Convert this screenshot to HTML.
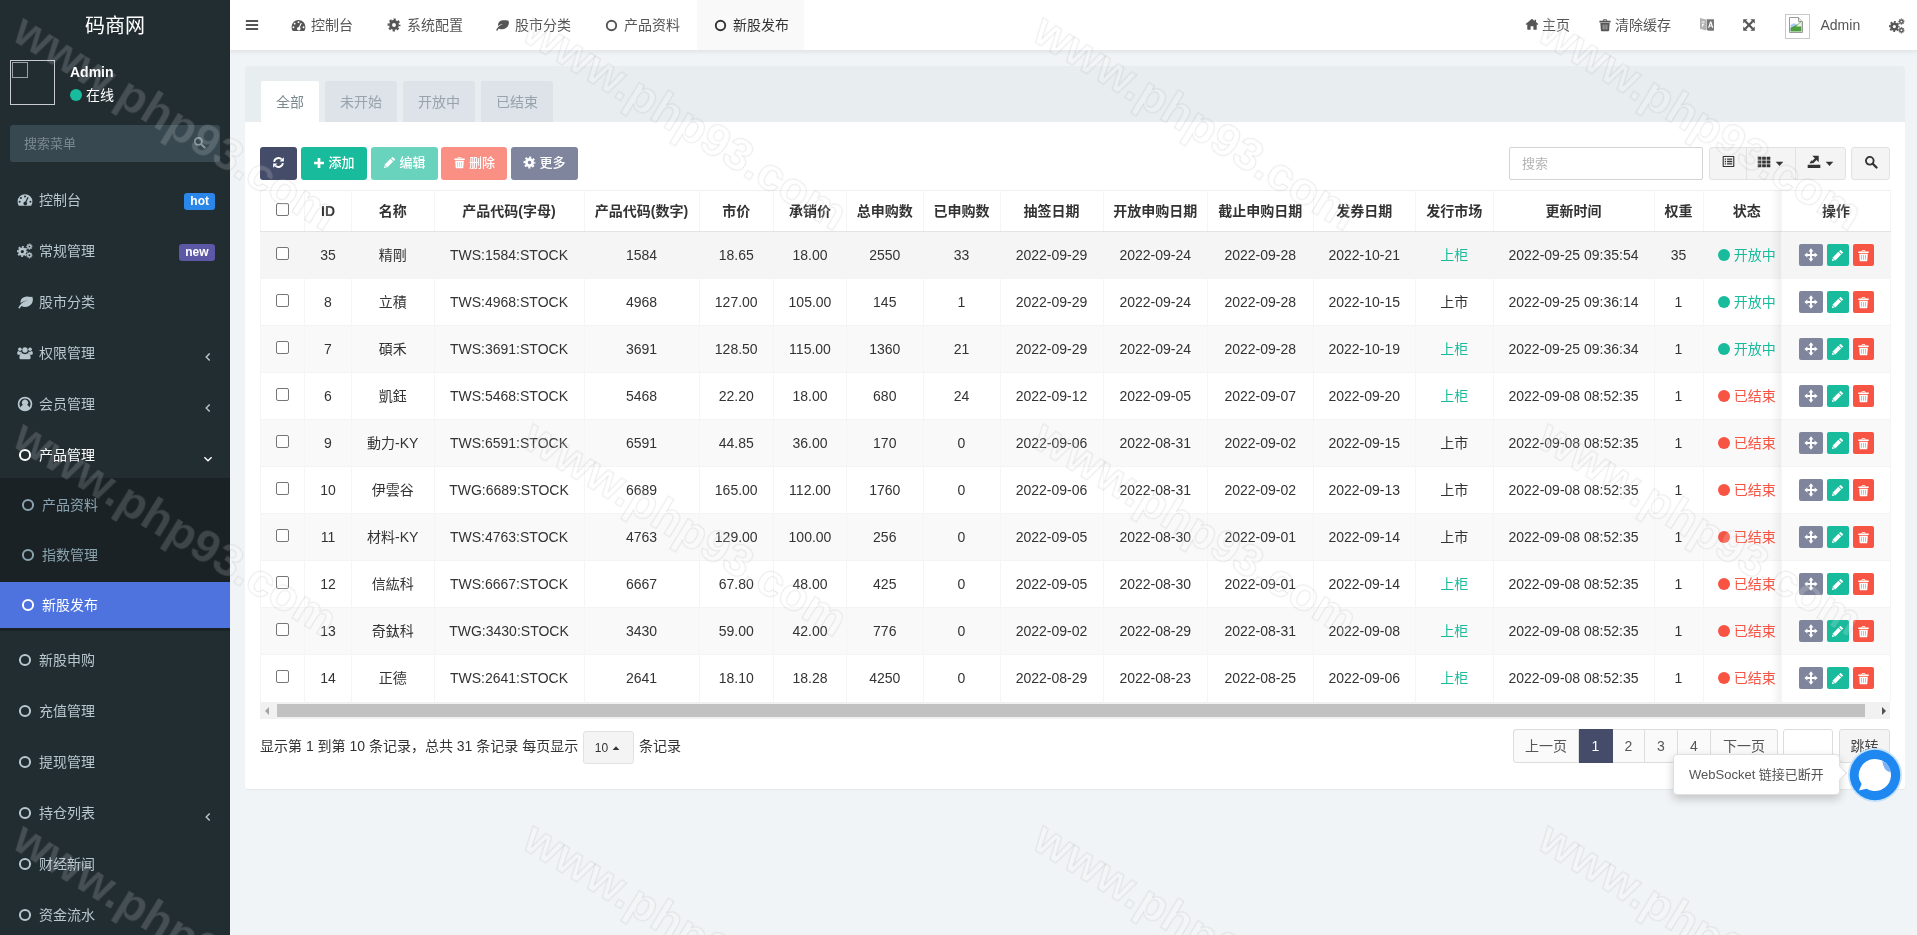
<!DOCTYPE html>
<html lang="zh-CN">
<head>
<meta charset="utf-8">
<title>码商网</title>
<style>
*{box-sizing:border-box;}
html,body{margin:0;padding:0;}
body{width:1917px;height:935px;overflow:hidden;will-change:transform;background:#f1f4f6;font-family:"Liberation Sans","Noto Sans CJK SC",sans-serif;font-size:14px;color:#333;position:relative;line-height:1.42857;}
svg{display:block;}
i,em,b,u{font-style:normal;text-decoration:none;}
.abs{position:absolute;}
/* ---------- sidebar ---------- */
#sidebar{position:absolute;left:0;top:0;width:230px;height:935px;background:#222d32;color:#b8c7ce;overflow:hidden;}
#logo{position:absolute;left:0;top:0;width:230px;height:50px;line-height:52px;text-align:center;color:#fff;font-size:20px;}
#avatar{position:absolute;left:10px;top:60px;width:45px;height:45px;border:1px solid #c8ccce;}
#avatar i{position:absolute;left:1px;top:1px;width:16px;height:16px;border:1px solid #9aa2a6;}
#uname{position:absolute;left:70px;top:63px;color:#fff;font-weight:bold;font-size:14px;}
#ustat{position:absolute;left:70px;top:86px;color:#fff;font-size:14px;line-height:18px;}
#ustat b{display:inline-block;width:12px;height:12px;border-radius:50%;background:#18bc9c;margin-right:4px;vertical-align:-1px;}
#sform{position:absolute;left:10px;top:125px;width:210px;height:37px;background:#374850;border-radius:3px;color:#7c8a91;line-height:37px;padding-left:14px;font-size:13px;}
#sform i{position:absolute;right:14px;top:11px;color:#8a979d;}
.mi{position:absolute;left:0;width:230px;height:51px;line-height:51px;padding-left:39px;color:#b8c7ce;font-size:14px;}
.mi svg{position:absolute;left:18px;top:18px;}
.mi.on{color:#fff;}
.badge{position:absolute;right:15px;top:18.5px;height:17px;line-height:17px;padding:0 6px;border-radius:3px;color:#fff;font-weight:bold;font-size:12px;}
.sub{position:absolute;left:0;top:478px;width:230px;height:153px;background:#1a2226;}
.si{position:absolute;left:0;width:230px;height:46px;line-height:46px;padding-left:42px;color:#8aa4af;font-size:14px;}
.si.on{background:#4e73df;color:#fff;}
.si svg{position:absolute;left:21px;top:16px;}
.arr{position:absolute;right:16px;top:23px;}
.arr svg{position:static;}
/* ---------- header ---------- */
#header{position:absolute;left:230px;top:0;width:1687px;height:51px;background:#fff;box-shadow:0 1px 4px rgba(0,21,41,.08);border-bottom:1px solid #e4e8eb;}
#header>div{position:absolute;}
#header .nt{position:absolute;top:0;height:50px;color:#555;margin-left:-230px;}
#header .nt.on{background:#f9f9f9;color:#333;}
.nt i{position:absolute;top:18px;}
.nt span{position:absolute;top:0;line-height:50px;white-space:nowrap;}
.hr{top:0;height:50px;margin-left:-230px;color:#555;}
.hr i{position:absolute;left:0;top:18px;}
.hr span{position:absolute;top:0;line-height:50px;white-space:nowrap;}
#himg{left:1555px;top:14px;width:25px;height:25px;border:1px solid #c9c9c9;background:#fff;}
#himg b{position:absolute;left:2px;top:2px;width:16px;height:16px;}
/* ---------- panel ---------- */
#panel{position:absolute;left:245px;top:66px;width:1660px;height:723px;background:#fff;border-radius:3px;box-shadow:0 1px 1px rgba(0,0,0,.05);}
#phead{position:absolute;left:0;top:0;width:1660px;height:56px;background:#e8edf0;border-radius:3px 3px 0 0;}
.ptab{position:absolute;top:15px;height:41px;line-height:42px;text-align:center;background:#dde3e9;color:#98a3ad;border-radius:2px 2px 0 0;}
.ptab.on{background:#fff;color:#7b8a8b;}
.btn{position:absolute;top:81px;height:33px;padding-bottom:2px;border-radius:3px;color:#fff;font-size:13px;font-weight:500;line-height:31px;display:flex;align-items:center;justify-content:center;white-space:nowrap;}
.btn span{margin-left:3px;}
#sinput{position:absolute;left:1264px;top:81px;width:194px;height:33px;border:1px solid #d4d4d4;border-radius:2px;line-height:31px;padding-left:12px;color:#b4b4b4;font-size:13px;background:#fff;}
.gbtn{position:absolute;top:81px;height:33px;padding-bottom:4px;border:1px solid #e2e2e2;background:#f4f4f4;border-radius:3px;color:#333;display:flex;align-items:center;justify-content:center;}
/* ---------- table ---------- */
#tb{position:absolute;left:15px;top:124px;width:1630px;border-collapse:collapse;table-layout:fixed;font-size:14px;}
#tb th,#tb td{text-align:center;padding:0;white-space:nowrap;overflow:hidden;border-left:1px solid #f5f5f5;border-right:1px solid #f5f5f5;}
#tb th{height:41px;padding-top:2px;font-weight:bold;color:#333;border-top:1px solid #f0f0f0;border-bottom:1px solid #e3e3e3;font-size:14px;}
#tb td{height:47px;padding-top:2px;color:#333;border-top:1px solid #f4f4f4;}
#tb tr.odd td{background:#f9f9f9;}
#tb tr.hov td{background:#f5f5f5;}
#tb td.g{color:#18bc9c;}
#tb td.r{color:#f75444;}
#tb td.st b{display:inline-block;width:12px;height:12px;border-radius:50%;margin-right:4px;vertical-align:-1px;}
.cb{display:inline-block;width:13px;height:13px;border:1px solid #767676;border-radius:2px;background:#fff;vertical-align:middle;position:relative;top:-3px;}
.opc{padding-top:0 !important;}
#tb .st{padding-left:9px;}
.op{display:inline-flex;height:22px;border-radius:2px;color:#fff;align-items:center;justify-content:center;vertical-align:middle;}
#opshadow{position:absolute;left:1526px;top:124px;width:10px;height:512px;background:linear-gradient(to right,rgba(0,0,0,0),rgba(0,0,0,.05));}
#scroll{position:absolute;left:15px;top:636px;width:1630px;height:17px;background:#f1f1f1;}
#scroll b{position:absolute;left:17px;top:2px;width:1588px;height:13px;background:#c1c1c1;}
#scroll i{position:absolute;top:5px;width:0;height:0;border:4px solid transparent;}
#scroll i.l{left:5px;border-right-color:#a3a3a3;border-left-width:0;}
#scroll i.r{right:4px;border-left-color:#505050;border-right-width:0;}
#pinfo{position:absolute;left:15px;top:664px;height:33px;line-height:32px;font-size:14px;color:#333;white-space:nowrap;}
.psize{display:inline-flex;align-items:center;justify-content:center;width:51px;height:33px;position:relative;top:1px;border:1px solid #e2e2e2;border-radius:3px;background:#f4f4f4;font-size:12px;vertical-align:top;margin:0 1px;}
.psize svg{margin-left:2px;}
#pager{position:absolute;left:1268px;top:663px;height:34px;display:flex;border-radius:3px;background:#fafafa;}
#pager a{display:block;height:34px;line-height:32px;text-align:center;color:#555;border:1px solid #ddd;border-left-width:0;font-size:14px;}
#pager a:first-child{border-left-width:1px;border-radius:3px 0 0 3px;}
#pager a:last-child{border-radius:0 3px 3px 0;}
#pager a.on{background:#444c69;color:#fff;border-color:#444c69;}
#jump{position:absolute;left:1538px;top:663px;width:50px;height:34px;border:1px solid #ddd;border-radius:3px;background:#fff;}
#jbtn{position:absolute;left:1594px;top:663px;width:51px;height:34px;border:1px solid #ddd;border-radius:3px;background:#f4f4f4;text-align:center;line-height:32px;color:#444;}
#wstip{position:absolute;left:1673px;top:754px;width:167px;height:41px;background:#fff;border:1px solid #e0e0e0;border-radius:4px;box-shadow:0 4px 10px rgba(0,0,0,.2);line-height:39px;padding-left:15px;font-size:13px;color:#555;white-space:nowrap;}
#wstip i{position:absolute;right:-6px;top:13px;width:10px;height:10px;background:#fff;border-right:1px solid #e0e0e0;border-top:1px solid #e0e0e0;transform:rotate(45deg);}
#wsbtn{position:absolute;left:1848px;top:747.5px;}
/* ---------- watermark ---------- */
.wm{position:absolute;font-size:47px;line-height:47px;letter-spacing:0;color:rgba(255,255,255,.16);-webkit-text-stroke:1px rgba(0,0,0,.09);transform-origin:0 0;transform:rotate(31.5deg);white-space:nowrap;pointer-events:none;font-weight:bold;}

</style>
</head>
<body>
<div id="sidebar">
<div id="logo">码商网</div>
<div id="avatar"><i></i></div>
<div id="uname">Admin</div>
<div id="ustat"><b></b>在线</div>
<div id="sform">搜索菜单<i><svg width="13" height="13" viewBox="0 0 16 16" style="" fill="currentColor"><circle cx="6.6" cy="6.6" r="4.4" fill="none" stroke="currentColor" stroke-width="2.1"/><path d="M10 10l4.3 4.3" stroke="currentColor" stroke-width="2.6" stroke-linecap="round"/></svg></i></div>
<div class="mi" style="top:174.5px"><svg width="16" height="16" viewBox="0 0 16 16" style="left:17.0px;top:17.0px" fill="currentColor"><path fill-rule="evenodd" d="M8 2.2a7.4 7.4 0 0 1 7.4 7.4c0 1.5-.4 2.8-1.1 3.9q-.2.3-.6.3H2.3q-.4 0-.6-.3A7.3 7.3 0 0 1 .6 9.6 7.4 7.4 0 0 1 8 2.2zM8 3.4a1 1 0 1 0 0 2 1 1 0 0 0 0-2zM3.9 5a1 1 0 1 0 0 2 1 1 0 0 0 0-2zM2.6 8.8a1 1 0 1 0 0 2 1 1 0 0 0 0-2zM13.4 8.8a1 1 0 1 0 0 2 1 1 0 0 0 0-2zM11.3 5.2l-1 .0-1.9 4.3a1.9 1.9 0 1 0 1.1.4l2-4.2z"/></svg><span>控制台</span><em class="badge" style="background:#2a86e8">hot</em></div>
<div class="mi" style="top:225.5px"><svg width="16" height="16" viewBox="0 0 16 16" style="left:17.0px;top:17.0px" fill="currentColor"><g transform="translate(-0.6 2.6) scale(0.74)"><circle cx="8" cy="8" r="3.9" fill="none" stroke="currentColor" stroke-width="3.4"/><circle cx="8" cy="8" r="6.3" fill="none" stroke="currentColor" stroke-width="2.2" stroke-dasharray="2.6 2.348" stroke-dashoffset="1.3"/></g><g transform="translate(8.9 0.1) scale(0.44)"><circle cx="8" cy="8" r="3.9" fill="none" stroke="currentColor" stroke-width="3.4"/><circle cx="8" cy="8" r="6.3" fill="none" stroke="currentColor" stroke-width="2.2" stroke-dasharray="2.6 2.348" stroke-dashoffset="1.3"/></g><g transform="translate(8.9 8.7) scale(0.44)"><circle cx="8" cy="8" r="3.9" fill="none" stroke="currentColor" stroke-width="3.4"/><circle cx="8" cy="8" r="6.3" fill="none" stroke="currentColor" stroke-width="2.2" stroke-dasharray="2.6 2.348" stroke-dashoffset="1.3"/></g></svg><span>常规管理</span><em class="badge" style="background:#5c58a6;padding:0 6.500px">new</em></div>
<div class="mi" style="top:276.5px"><svg width="16" height="16" viewBox="0 0 16 16" style="left:17.0px;top:17.0px" fill="currentColor"><path d="M15.300 2.800c.6 1.200.7 2.600.5 3.900-.6 3.600-3.500 6-7.300 6.200-1.600.1-3-.3-4.100-1-.7.800-1.200 1.700-1.600 2.700l-1.600-.7c.7-1.600 1.700-3 3-4.200 1.900-1.700 4.200-2.700 6.600-3.100-2.500 0-5.100.9-7.200 2.600-.5-3.400 1.700-6.100 5.100-6.500 2.300-.3 4.700.4 6.600.1z"/></svg><span>股市分类</span></div>
<div class="mi" style="top:327.5px"><svg width="16" height="16" viewBox="0 0 16 16" style="left:17.0px;top:17.0px" fill="currentColor"><circle cx="8" cy="5" r="2.7"/><path d="M3.900 14.300q-1.500 0-1.500-1.400c0-2.600.900-4.700 2.500-4.800.800.700 1.900 1.200 3.100 1.200s2.300-.5 3.100-1.200c1.600.1 2.500 2.200 2.500 4.800q0 1.400-1.500 1.400z"/><circle cx="2.900" cy="4.300" r="1.800"/><circle cx="13.100" cy="4.300" r="1.800"/><path d="M.2 8.500c0-1.400.4-2.400 1.200-2.400.4.400.9.600 1.500.600.500 0 .9-.1 1.300-.3.100.500.400 1 .700 1.400-.900.300-1.500 1-1.900 1.900H1.400Q.2 9.700.2 8.500zM15.800 8.500c0-1.400-.4-2.400-1.200-2.400-.4.400-.9.600-1.500.600-.5 0-.9-.1-1.300-.3-.1.500-.4 1-.7 1.400.9.300 1.500 1 1.900 1.900h1.600q1.200 0 1.200-1.200z"/></svg><span>权限管理</span><i class="arr"><svg width="12" height="12" viewBox="0 0 16 16" style="" fill="currentColor"><path d="M10.2 3.2L5.6 8l4.6 4.8" fill="none" stroke="currentColor" stroke-width="1.9"/></svg></i></div>
<div class="mi" style="top:378.5px"><svg width="16" height="16" viewBox="0 0 16 16" style="left:17.0px;top:17.0px" fill="currentColor"><path fill-rule="evenodd" d="M8 .7a7.300 7.300 0 1 0 0 14.600A7.300 7.300 0 0 0 8 .7zM8 2.500a5.500 5.500 0 0 1 4.300 8.900C11.900 10.100 11 9.300 10.100 9a3.100 3.100 0 1 0-4.200 0C5 9.300 4.100 10.100 3.700 11.400A5.500 5.500 0 0 1 8 2.500z"/></svg><span>会员管理</span><i class="arr"><svg width="12" height="12" viewBox="0 0 16 16" style="" fill="currentColor"><path d="M10.2 3.2L5.6 8l4.6 4.8" fill="none" stroke="currentColor" stroke-width="1.9"/></svg></i></div>
<div class="mi on" style="top:429.5px"><svg width="14" height="14" viewBox="0 0 16 16" style="left:18.0px;top:18.0px" fill="currentColor"><circle cx="8" cy="8" r="5.8" fill="none" stroke="currentColor" stroke-width="2.3"/></svg><span>产品管理</span><i class="arr"><svg width="12" height="12" viewBox="0 0 16 16" style="" fill="currentColor"><path d="M3.2 5.8L8 10.4l4.8-4.6" fill="none" stroke="currentColor" stroke-width="1.9"/></svg></i></div>
<div class="sub">
<div class="si" style="top:4px"><svg width="14" height="14" viewBox="0 0 16 16" style="" fill="currentColor"><circle cx="8" cy="8" r="5.8" fill="none" stroke="currentColor" stroke-width="2.3"/></svg><span>产品资料</span></div>
<div class="si" style="top:54px"><svg width="14" height="14" viewBox="0 0 16 16" style="" fill="currentColor"><circle cx="8" cy="8" r="5.8" fill="none" stroke="currentColor" stroke-width="2.3"/></svg><span>指数管理</span></div>
<div class="si on" style="top:104px"><svg width="14" height="14" viewBox="0 0 16 16" style="" fill="currentColor"><circle cx="8" cy="8" r="5.8" fill="none" stroke="currentColor" stroke-width="2.3"/></svg><span>新股发布</span></div>
</div>
<div class="mi" style="top:634.5px"><svg width="14" height="14" viewBox="0 0 16 16" style="left:18.0px;top:18.0px" fill="currentColor"><circle cx="8" cy="8" r="5.8" fill="none" stroke="currentColor" stroke-width="2.3"/></svg><span>新股申购</span></div>
<div class="mi" style="top:685.5px"><svg width="14" height="14" viewBox="0 0 16 16" style="left:18.0px;top:18.0px" fill="currentColor"><circle cx="8" cy="8" r="5.8" fill="none" stroke="currentColor" stroke-width="2.3"/></svg><span>充值管理</span></div>
<div class="mi" style="top:736.5px"><svg width="14" height="14" viewBox="0 0 16 16" style="left:18.0px;top:18.0px" fill="currentColor"><circle cx="8" cy="8" r="5.8" fill="none" stroke="currentColor" stroke-width="2.3"/></svg><span>提现管理</span></div>
<div class="mi" style="top:787.5px"><svg width="14" height="14" viewBox="0 0 16 16" style="left:18.0px;top:18.0px" fill="currentColor"><circle cx="8" cy="8" r="5.8" fill="none" stroke="currentColor" stroke-width="2.3"/></svg><span>持仓列表</span><i class="arr"><svg width="12" height="12" viewBox="0 0 16 16" style="" fill="currentColor"><path d="M10.2 3.2L5.6 8l4.6 4.8" fill="none" stroke="currentColor" stroke-width="1.9"/></svg></i></div>
<div class="mi" style="top:838.5px"><svg width="14" height="14" viewBox="0 0 16 16" style="left:18.0px;top:18.0px" fill="currentColor"><circle cx="8" cy="8" r="5.8" fill="none" stroke="currentColor" stroke-width="2.3"/></svg><span>财经新闻</span></div>
<div class="mi" style="top:889.5px"><svg width="14" height="14" viewBox="0 0 16 16" style="left:18.0px;top:18.0px" fill="currentColor"><circle cx="8" cy="8" r="5.8" fill="none" stroke="currentColor" stroke-width="2.3"/></svg><span>资金流水</span></div>
</div>
<div id="header">
<div class="abs" style="left:15px;top:18px;color:#555"><svg width="14" height="14" viewBox="0 0 16 16" style="" fill="currentColor"><path d="M1 2.4h14v2.3H1zM1 6.9h14v2.3H1zM1 11.4h14v2.3H1z"/></svg></div>
<div class="nt" style="left:277px;width:92px"><i style="left:13.5px;top:17.5px"><svg width="15" height="15" viewBox="0 0 16 16" style="" fill="currentColor"><path fill-rule="evenodd" d="M8 2.2a7.4 7.4 0 0 1 7.4 7.4c0 1.5-.4 2.8-1.1 3.9q-.2.3-.6.3H2.3q-.4 0-.6-.3A7.3 7.3 0 0 1 .6 9.6 7.4 7.4 0 0 1 8 2.2zM8 3.4a1 1 0 1 0 0 2 1 1 0 0 0 0-2zM3.9 5a1 1 0 1 0 0 2 1 1 0 0 0 0-2zM2.6 8.8a1 1 0 1 0 0 2 1 1 0 0 0 0-2zM13.4 8.8a1 1 0 1 0 0 2 1 1 0 0 0 0-2zM11.3 5.2l-1 .0-1.9 4.3a1.9 1.9 0 1 0 1.1.4l2-4.2z"/></svg></i><span style="left:34px">控制台</span></div>
<div class="nt" style="left:373px;width:105px"><i style="left:14.0px;top:18.0px"><svg width="14" height="14" viewBox="0 0 16 16" style="" fill="currentColor"><circle cx="8" cy="8" r="3.9" fill="none" stroke="currentColor" stroke-width="3.4"/><circle cx="8" cy="8" r="6.3" fill="none" stroke="currentColor" stroke-width="2.2" stroke-dasharray="2.6 2.348" stroke-dashoffset="1.3"/></svg></i><span style="left:34px">系统配置</span></div>
<div class="nt" style="left:481px;width:105px"><i style="left:14.0px;top:18.0px"><svg width="14" height="14" viewBox="0 0 16 16" style="" fill="currentColor"><path d="M15.300 2.800c.6 1.200.7 2.600.5 3.900-.6 3.600-3.500 6-7.300 6.200-1.600.1-3-.3-4.100-1-.7.800-1.200 1.700-1.600 2.700l-1.600-.7c.7-1.600 1.700-3 3-4.200 1.900-1.700 4.200-2.700 6.600-3.100-2.500 0-5.100.9-7.200 2.600-.5-3.400 1.700-6.100 5.100-6.500 2.300-.3 4.700.4 6.600.1z"/></svg></i><span style="left:34px">股市分类</span></div>
<div class="nt" style="left:590px;width:105px"><i style="left:15.0px;top:18.5px"><svg width="13" height="13" viewBox="0 0 16 16" style="" fill="currentColor"><circle cx="8" cy="8" r="5.8" fill="none" stroke="currentColor" stroke-width="2.3"/></svg></i><span style="left:34px">产品资料</span></div>
<div class="nt on" style="left:697px;width:107px"><i style="left:17.0px;top:18.5px"><svg width="13" height="13" viewBox="0 0 16 16" style="" fill="currentColor"><circle cx="8" cy="8" r="5.8" fill="none" stroke="currentColor" stroke-width="2.3"/></svg></i><span style="left:36px">新股发布</span></div>
<div class="hr" style="left:1525px"><i><svg width="14" height="14" viewBox="0 0 16 16" style="" fill="currentColor"><path d="M8 2.600l5.400 4.500v5.700q0 .5-.5.500H9.600V9.500H6.400v3.800H3.100q-.5 0-.5-.5V7.100zM8 .9l2.900 2.400V1.900h1.700v2.800l2.600 2.200-.9 1L8 2.700 1.700 7.900l-.9-1z"/></svg></i><span style="left:17px">主页</span></div>
<div class="hr" style="left:1598px"><i><svg width="14" height="14" viewBox="0 0 16 16" style="" fill="currentColor"><path fill-rule="evenodd" d="M1.600 3.200h3.700l.9-1.800h3.600l.9 1.800h3.700v1.800H1.600zM6.600 2.500l-.4.7h3.600l-.4-.7zM2.700 5.700h10.600l-.6 8.400q-.1 1.100-1.200 1.100H4.500q-1.100 0-1.200-1.100zM5.500 7.500v5.600h.6V7.500zM7.700 7.500v5.600h.6V7.500zM9.900 7.500v5.600h.6V7.500z"/></svg></i><span style="left:17px">清除缓存</span></div>
<div class="hr" style="left:1699px"><i style="top:16px;color:#555"><svg width="16" height="16" viewBox="0 0 16 16" style="" fill="currentColor"><path d="M1 2l6 1.600v10.800L1 12.800z" opacity=".45"/><path fill-rule="evenodd" d="M7.600 3.200H15v11.600H9.400L7.600 13.800zM11.100 5.600L9.100 11.800h1.200l.4-1.400h2l.4 1.400h1.200L12.300 5.600zM11.700 7.200l.7 2.200H11z" opacity=".8"/><path d="M2.600 5.600v1h3v-1zM3 7.800l.2 3h.9l.1-2h.9v-1z" fill="#fff"/></svg></i></div>
<div class="hr" style="left:1742px"><i><svg width="14" height="14" viewBox="0 0 16 16" style="" fill="currentColor"><path d="M1.400 1.400h5L1.400 6.400zM14.600 1.400v5L9.600 1.400zM1.400 14.600v-5l5 5zM14.600 14.600h-5l5-5z"/><path d="M3.800 3.800l8.400 8.400M12.200 3.800l-8.400 8.400" stroke="currentColor" stroke-width="2.5"/></svg></i></div>
<div id="himg"><b><svg width="16" height="16" viewBox="0 0 16 16"><path d="M1.500 .5h9l4 4v11h-13z" fill="#fff" stroke="#9a9a9a"/><path d="M10.500 .5v4h4" fill="#e6e6e6" stroke="#9a9a9a"/><path d="M2.500 8.500c2-2.500 5-2.500 6.500-.5l-6.500 6z" fill="#a9c8f5"/><path d="M2.500 14.500V11c3-2 7-2.500 10-6.500l1 1v9z" fill="#4f9e3f"/><path d="M8 9.500l5-4.500.5.500v4z" fill="#fff" opacity=".85"/></svg></b></div>
<div class="hr" style="left:1820.5px"><span style="left:0;color:#555">Admin</span></div>
<div class="hr" style="left:1889px"><i><svg width="16" height="16" viewBox="0 0 16 16" style="" fill="currentColor"><g transform="translate(-0.6 2.6) scale(0.74)"><circle cx="8" cy="8" r="3.9" fill="none" stroke="currentColor" stroke-width="3.4"/><circle cx="8" cy="8" r="6.3" fill="none" stroke="currentColor" stroke-width="2.2" stroke-dasharray="2.6 2.348" stroke-dashoffset="1.3"/></g><g transform="translate(8.9 0.1) scale(0.44)"><circle cx="8" cy="8" r="3.9" fill="none" stroke="currentColor" stroke-width="3.4"/><circle cx="8" cy="8" r="6.3" fill="none" stroke="currentColor" stroke-width="2.2" stroke-dasharray="2.6 2.348" stroke-dashoffset="1.3"/></g><g transform="translate(8.9 8.7) scale(0.44)"><circle cx="8" cy="8" r="3.9" fill="none" stroke="currentColor" stroke-width="3.4"/><circle cx="8" cy="8" r="6.3" fill="none" stroke="currentColor" stroke-width="2.2" stroke-dasharray="2.6 2.348" stroke-dashoffset="1.3"/></g></svg></i></div>
</div>
<div id="panel">
<div id="phead">
 <div class="ptab on" style="left:16px;width:58px">全部</div>
 <div class="ptab" style="left:80px;width:72px">未开始</div>
 <div class="ptab" style="left:158px;width:72px">开放中</div>
 <div class="ptab" style="left:236px;width:72px">已结束</div>
</div>
<div class="btn" style="left:15px;width:37px;background:#444c69"><svg width="13" height="13" viewBox="0 0 16 16" style="" fill="currentColor"><path d="M2.6 7.2A5.5 5.5 0 0 1 12 4.2" fill="none" stroke="currentColor" stroke-width="2.3"/><path d="M13.4 8.8A5.5 5.5 0 0 1 4 11.8" fill="none" stroke="currentColor" stroke-width="2.3"/><path d="M14.6 1.6v5.2H9.4zM1.4 14.4V9.2h5.2z"/></svg></div>
<div class="btn" style="left:56px;width:66px;background:#18bc9c"><svg width="12" height="12" viewBox="0 0 16 16" style="" fill="currentColor"><path d="M6.200 1.400h3.600v4.800h4.800v3.600H9.800v4.800H6.200V9.800H1.400V6.200h4.800z"/></svg><span>添加</span></div>
<div class="btn" style="left:126px;width:67px;background:#69d3be"><svg width="13" height="13" viewBox="0 0 16 16" style="" fill="currentColor"><path d="M11.2 1.4q.5-.5 1 0l2.4 2.4q.5.5 0 1L13.3 6.1 9.9 2.7zM9.1 3.5l3.4 3.4-7.3 7.3-3.4-3.4zM1.3 14.7l.4-3.1 2.7 2.7z"/></svg><span>编辑</span></div>
<div class="btn" style="left:196px;width:66px;background:#fa8f84"><svg width="13" height="13" viewBox="0 0 16 16" style="" fill="currentColor"><path fill-rule="evenodd" d="M1.600 3.200h3.700l.9-1.800h3.600l.9 1.800h3.700v1.800H1.600zM6.600 2.500l-.4.7h3.600l-.4-.7zM2.700 5.700h10.600l-.6 8.400q-.1 1.100-1.200 1.100H4.500q-1.100 0-1.200-1.100zM5.500 7.500v5.600h.6V7.500zM7.700 7.500v5.600h.6V7.500zM9.900 7.500v5.600h.6V7.500z"/></svg><span>删除</span></div>
<div class="btn" style="left:266px;width:67px;background:#7f859d"><svg width="13" height="13" viewBox="0 0 16 16" style="" fill="currentColor"><circle cx="8" cy="8" r="3.9" fill="none" stroke="currentColor" stroke-width="3.4"/><circle cx="8" cy="8" r="6.3" fill="none" stroke="currentColor" stroke-width="2.2" stroke-dasharray="2.6 2.348" stroke-dashoffset="1.3"/></svg><span>更多</span></div>
<div id="sinput">搜索</div>
<div class="gbtn" style="left:1464px;width:38px;border-radius:3px 0 0 3px"><svg width="13" height="13" viewBox="0 0 16 16" style="" fill="currentColor"><path fill-rule="evenodd" d="M1.400 1.200h13.200q.6 0 .6.600v12.400q0 .6-.6.600H1.400q-.6 0-.6-.600V1.800q0-.6.600-.600zM2.200 2.600v10.800h11.600V2.600zM3.400 4.200h1.600v1.600H3.400zM6.200 4.200h6.400v1.600H6.200zM3.400 7.200h1.600v1.600H3.400zM6.200 7.200h6.400v1.600H6.200zM3.400 10.200h1.600v1.600H3.400zM6.200 10.200h6.400v1.600H6.200z"/></svg></div>
<div class="gbtn" style="left:1501px;width:50px;border-radius:0"><svg width="14" height="14" viewBox="0 0 16 16" style="" fill="currentColor"><path d="M.8 2h4.200v3.400H.8zM5.900 2h4.200v3.400H5.900zM11 2h4.200v3.400H11zM.8 6.300h4.200v3.400H.8zM5.900 6.300h4.200v3.400H5.900zM11 6.300h4.200v3.400H11zM.8 10.600h4.200v3.400H.8zM5.900 10.600h4.200v3.400H5.900zM11 10.600h4.200v3.400H11z"/></svg><svg width="11" height="11" viewBox="0 0 16 16" style="margin-left:3px;margin-top:3px" fill="currentColor"><path d="M2.500 5.500h11L8 11.500z"/></svg></div>
<div class="gbtn" style="left:1550px;width:51px;border-radius:0 3px 3px 0"><svg width="14" height="14" viewBox="0 0 16 16" style="" fill="currentColor"><path d="M.800 11h14.400v3.800H.8zM6 .800h7.400v7.400l-2.500-2.500-3.400 3.400-1.900-1.900 3.400-3.400z"/><path d="M2.800 9.800l2.200-3.800 3.200 3.200z"/></svg><svg width="11" height="11" viewBox="0 0 16 16" style="margin-left:3px;margin-top:3px" fill="currentColor"><path d="M2.500 5.500h11L8 11.500z"/></svg></div>
<div class="gbtn" style="left:1606px;width:39px"><svg width="14" height="14" viewBox="0 0 16 16" style="" fill="currentColor"><circle cx="6.6" cy="6.6" r="4.4" fill="none" stroke="currentColor" stroke-width="2.1"/><path d="M10 10l4.3 4.3" stroke="currentColor" stroke-width="2.6" stroke-linecap="round"/></svg></div>
<table id="tb"><colgroup><col style="width:44px"><col style="width:47px"><col style="width:82.5px"><col style="width:150.0px"><col style="width:115.0px"><col style="width:74.5px"><col style="width:73px"><col style="width:76.5px"><col style="width:77.0px"><col style="width:103.0px"><col style="width:104.5px"><col style="width:105.5px"><col style="width:102.5px"><col style="width:77.5px"><col style="width:161.0px"><col style="width:49.0px"><col style="width:78.5px"><col style="width:109px"></colgroup><thead><tr><th><i class="cb"></i></th><th>ID</th><th>名称</th><th>产品代码(字母)</th><th>产品代码(数字)</th><th>市价</th><th>承销价</th><th>总申购数</th><th>已申购数</th><th>抽签日期</th><th>开放申购日期</th><th>截止申购日期</th><th>发券日期</th><th>发行市场</th><th>更新时间</th><th>权重</th><th class=st>状态</th><th>操作</th></tr></thead><tbody><tr class="hov"><td><i class="cb"></i></td><td>35</td><td>精剛</td><td>TWS:1584:STOCK</td><td>1584</td><td>18.65</td><td>18.00</td><td>2550</td><td>33</td><td>2022-09-29</td><td>2022-09-24</td><td>2022-09-28</td><td>2022-10-21</td><td class="g">上柜</td><td>2022-09-25 09:35:54</td><td>35</td><td class="g st"><b style="background:#18bc9c"></b>开放中</td><td class="opc"><a class="op" style="width:24px;background:#7f859d"><svg width="14" height="14" viewBox="0 0 16 16" style="" fill="currentColor"><path d="M8 .4l2.900 3.500H5.100zM8 15.600l-2.900-3.500h5.800zM.4 8l3.500-2.900v5.800zM15.600 8l-3.500 2.900V5.100z"/><path d="M8 3.500v9M3.500 8h9" stroke="currentColor" stroke-width="2.200"/></svg></a><a class="op" style="width:22px;background:#18bc9c;margin-left:4px"><svg width="13" height="13" viewBox="0 0 16 16" style="" fill="currentColor"><path d="M11.2 1.4q.5-.5 1 0l2.4 2.4q.5.5 0 1L13.3 6.1 9.9 2.7zM9.1 3.5l3.4 3.4-7.3 7.3-3.4-3.4zM1.3 14.7l.4-3.1 2.7 2.7z"/></svg></a><a class="op" style="width:21px;background:#f75444;margin-left:4px"><svg width="13" height="13" viewBox="0 0 16 16" style="" fill="currentColor"><path fill-rule="evenodd" d="M1.600 3.200h3.700l.9-1.800h3.600l.9 1.800h3.700v1.800H1.600zM6.600 2.500l-.4.7h3.600l-.4-.7zM2.700 5.700h10.600l-.6 8.400q-.1 1.100-1.200 1.100H4.500q-1.100 0-1.200-1.100zM5.500 7.500v5.600h.6V7.500zM7.700 7.500v5.600h.6V7.500zM9.900 7.500v5.600h.6V7.500z"/></svg></a></td></tr><tr class=""><td><i class="cb"></i></td><td>8</td><td>立積</td><td>TWS:4968:STOCK</td><td>4968</td><td>127.00</td><td>105.00</td><td>145</td><td>1</td><td>2022-09-29</td><td>2022-09-24</td><td>2022-09-28</td><td>2022-10-15</td><td class="">上市</td><td>2022-09-25 09:36:14</td><td>1</td><td class="g st"><b style="background:#18bc9c"></b>开放中</td><td class="opc"><a class="op" style="width:24px;background:#7f859d"><svg width="14" height="14" viewBox="0 0 16 16" style="" fill="currentColor"><path d="M8 .4l2.900 3.500H5.100zM8 15.600l-2.900-3.500h5.800zM.4 8l3.500-2.900v5.800zM15.600 8l-3.500 2.900V5.100z"/><path d="M8 3.500v9M3.500 8h9" stroke="currentColor" stroke-width="2.200"/></svg></a><a class="op" style="width:22px;background:#18bc9c;margin-left:4px"><svg width="13" height="13" viewBox="0 0 16 16" style="" fill="currentColor"><path d="M11.2 1.4q.5-.5 1 0l2.4 2.4q.5.5 0 1L13.3 6.1 9.9 2.7zM9.1 3.5l3.4 3.4-7.3 7.3-3.4-3.4zM1.3 14.7l.4-3.1 2.7 2.7z"/></svg></a><a class="op" style="width:21px;background:#f75444;margin-left:4px"><svg width="13" height="13" viewBox="0 0 16 16" style="" fill="currentColor"><path fill-rule="evenodd" d="M1.600 3.200h3.700l.9-1.800h3.600l.9 1.800h3.700v1.800H1.600zM6.600 2.500l-.4.7h3.600l-.4-.7zM2.700 5.700h10.600l-.6 8.400q-.1 1.100-1.200 1.100H4.500q-1.100 0-1.200-1.100zM5.500 7.500v5.600h.6V7.500zM7.700 7.500v5.600h.6V7.500zM9.900 7.500v5.600h.6V7.500z"/></svg></a></td></tr><tr class="odd"><td><i class="cb"></i></td><td>7</td><td>碩禾</td><td>TWS:3691:STOCK</td><td>3691</td><td>128.50</td><td>115.00</td><td>1360</td><td>21</td><td>2022-09-29</td><td>2022-09-24</td><td>2022-09-28</td><td>2022-10-19</td><td class="g">上柜</td><td>2022-09-25 09:36:34</td><td>1</td><td class="g st"><b style="background:#18bc9c"></b>开放中</td><td class="opc"><a class="op" style="width:24px;background:#7f859d"><svg width="14" height="14" viewBox="0 0 16 16" style="" fill="currentColor"><path d="M8 .4l2.900 3.500H5.100zM8 15.600l-2.900-3.500h5.800zM.4 8l3.500-2.900v5.800zM15.600 8l-3.500 2.900V5.100z"/><path d="M8 3.500v9M3.500 8h9" stroke="currentColor" stroke-width="2.200"/></svg></a><a class="op" style="width:22px;background:#18bc9c;margin-left:4px"><svg width="13" height="13" viewBox="0 0 16 16" style="" fill="currentColor"><path d="M11.2 1.4q.5-.5 1 0l2.4 2.4q.5.5 0 1L13.3 6.1 9.9 2.7zM9.1 3.5l3.4 3.4-7.3 7.3-3.4-3.4zM1.3 14.7l.4-3.1 2.7 2.7z"/></svg></a><a class="op" style="width:21px;background:#f75444;margin-left:4px"><svg width="13" height="13" viewBox="0 0 16 16" style="" fill="currentColor"><path fill-rule="evenodd" d="M1.600 3.200h3.700l.9-1.800h3.600l.9 1.800h3.700v1.800H1.600zM6.600 2.500l-.4.7h3.600l-.4-.7zM2.700 5.700h10.600l-.6 8.400q-.1 1.100-1.200 1.100H4.500q-1.100 0-1.200-1.100zM5.500 7.500v5.600h.6V7.500zM7.700 7.500v5.600h.6V7.500zM9.900 7.500v5.600h.6V7.500z"/></svg></a></td></tr><tr class=""><td><i class="cb"></i></td><td>6</td><td>凱鈺</td><td>TWS:5468:STOCK</td><td>5468</td><td>22.20</td><td>18.00</td><td>680</td><td>24</td><td>2022-09-12</td><td>2022-09-05</td><td>2022-09-07</td><td>2022-09-20</td><td class="g">上柜</td><td>2022-09-08 08:52:35</td><td>1</td><td class="r st"><b style="background:#f75444"></b>已结束</td><td class="opc"><a class="op" style="width:24px;background:#7f859d"><svg width="14" height="14" viewBox="0 0 16 16" style="" fill="currentColor"><path d="M8 .4l2.900 3.500H5.100zM8 15.600l-2.900-3.500h5.800zM.4 8l3.500-2.900v5.800zM15.600 8l-3.500 2.900V5.100z"/><path d="M8 3.500v9M3.500 8h9" stroke="currentColor" stroke-width="2.200"/></svg></a><a class="op" style="width:22px;background:#18bc9c;margin-left:4px"><svg width="13" height="13" viewBox="0 0 16 16" style="" fill="currentColor"><path d="M11.2 1.4q.5-.5 1 0l2.4 2.4q.5.5 0 1L13.3 6.1 9.9 2.7zM9.1 3.5l3.4 3.4-7.3 7.3-3.4-3.4zM1.3 14.7l.4-3.1 2.7 2.7z"/></svg></a><a class="op" style="width:21px;background:#f75444;margin-left:4px"><svg width="13" height="13" viewBox="0 0 16 16" style="" fill="currentColor"><path fill-rule="evenodd" d="M1.600 3.200h3.700l.9-1.800h3.600l.9 1.800h3.700v1.800H1.600zM6.600 2.500l-.4.7h3.600l-.4-.7zM2.700 5.700h10.600l-.6 8.400q-.1 1.100-1.200 1.100H4.500q-1.100 0-1.200-1.100zM5.500 7.500v5.600h.6V7.500zM7.700 7.500v5.600h.6V7.500zM9.900 7.500v5.600h.6V7.500z"/></svg></a></td></tr><tr class="odd"><td><i class="cb"></i></td><td>9</td><td>動力-KY</td><td>TWS:6591:STOCK</td><td>6591</td><td>44.85</td><td>36.00</td><td>170</td><td>0</td><td>2022-09-06</td><td>2022-08-31</td><td>2022-09-02</td><td>2022-09-15</td><td class="">上市</td><td>2022-09-08 08:52:35</td><td>1</td><td class="r st"><b style="background:#f75444"></b>已结束</td><td class="opc"><a class="op" style="width:24px;background:#7f859d"><svg width="14" height="14" viewBox="0 0 16 16" style="" fill="currentColor"><path d="M8 .4l2.900 3.500H5.100zM8 15.600l-2.900-3.500h5.800zM.4 8l3.500-2.900v5.800zM15.600 8l-3.500 2.900V5.100z"/><path d="M8 3.500v9M3.500 8h9" stroke="currentColor" stroke-width="2.200"/></svg></a><a class="op" style="width:22px;background:#18bc9c;margin-left:4px"><svg width="13" height="13" viewBox="0 0 16 16" style="" fill="currentColor"><path d="M11.2 1.4q.5-.5 1 0l2.4 2.4q.5.5 0 1L13.3 6.1 9.9 2.7zM9.1 3.5l3.4 3.4-7.3 7.3-3.4-3.4zM1.3 14.7l.4-3.1 2.7 2.7z"/></svg></a><a class="op" style="width:21px;background:#f75444;margin-left:4px"><svg width="13" height="13" viewBox="0 0 16 16" style="" fill="currentColor"><path fill-rule="evenodd" d="M1.600 3.200h3.700l.9-1.800h3.600l.9 1.800h3.700v1.800H1.600zM6.600 2.500l-.4.7h3.600l-.4-.7zM2.700 5.700h10.600l-.6 8.400q-.1 1.100-1.200 1.100H4.500q-1.100 0-1.200-1.100zM5.500 7.500v5.600h.6V7.500zM7.700 7.500v5.600h.6V7.500zM9.900 7.500v5.600h.6V7.500z"/></svg></a></td></tr><tr class=""><td><i class="cb"></i></td><td>10</td><td>伊雲谷</td><td>TWG:6689:STOCK</td><td>6689</td><td>165.00</td><td>112.00</td><td>1760</td><td>0</td><td>2022-09-06</td><td>2022-08-31</td><td>2022-09-02</td><td>2022-09-13</td><td class="">上市</td><td>2022-09-08 08:52:35</td><td>1</td><td class="r st"><b style="background:#f75444"></b>已结束</td><td class="opc"><a class="op" style="width:24px;background:#7f859d"><svg width="14" height="14" viewBox="0 0 16 16" style="" fill="currentColor"><path d="M8 .4l2.900 3.500H5.100zM8 15.600l-2.900-3.500h5.800zM.4 8l3.500-2.900v5.800zM15.600 8l-3.500 2.900V5.100z"/><path d="M8 3.500v9M3.500 8h9" stroke="currentColor" stroke-width="2.200"/></svg></a><a class="op" style="width:22px;background:#18bc9c;margin-left:4px"><svg width="13" height="13" viewBox="0 0 16 16" style="" fill="currentColor"><path d="M11.2 1.4q.5-.5 1 0l2.4 2.4q.5.5 0 1L13.3 6.1 9.9 2.7zM9.1 3.5l3.4 3.4-7.3 7.3-3.4-3.4zM1.3 14.7l.4-3.1 2.7 2.7z"/></svg></a><a class="op" style="width:21px;background:#f75444;margin-left:4px"><svg width="13" height="13" viewBox="0 0 16 16" style="" fill="currentColor"><path fill-rule="evenodd" d="M1.600 3.200h3.700l.9-1.800h3.600l.9 1.800h3.700v1.800H1.600zM6.600 2.500l-.4.7h3.600l-.4-.7zM2.700 5.700h10.600l-.6 8.400q-.1 1.100-1.200 1.100H4.500q-1.100 0-1.200-1.100zM5.500 7.500v5.600h.6V7.500zM7.700 7.500v5.600h.6V7.500zM9.900 7.500v5.600h.6V7.500z"/></svg></a></td></tr><tr class="odd"><td><i class="cb"></i></td><td>11</td><td>材料-KY</td><td>TWS:4763:STOCK</td><td>4763</td><td>129.00</td><td>100.00</td><td>256</td><td>0</td><td>2022-09-05</td><td>2022-08-30</td><td>2022-09-01</td><td>2022-09-14</td><td class="">上市</td><td>2022-09-08 08:52:35</td><td>1</td><td class="r st"><b style="background:#f75444"></b>已结束</td><td class="opc"><a class="op" style="width:24px;background:#7f859d"><svg width="14" height="14" viewBox="0 0 16 16" style="" fill="currentColor"><path d="M8 .4l2.900 3.500H5.100zM8 15.600l-2.900-3.500h5.800zM.4 8l3.500-2.900v5.800zM15.600 8l-3.500 2.900V5.100z"/><path d="M8 3.500v9M3.500 8h9" stroke="currentColor" stroke-width="2.200"/></svg></a><a class="op" style="width:22px;background:#18bc9c;margin-left:4px"><svg width="13" height="13" viewBox="0 0 16 16" style="" fill="currentColor"><path d="M11.2 1.4q.5-.5 1 0l2.4 2.4q.5.5 0 1L13.3 6.1 9.9 2.7zM9.1 3.5l3.4 3.4-7.3 7.3-3.4-3.4zM1.3 14.7l.4-3.1 2.7 2.7z"/></svg></a><a class="op" style="width:21px;background:#f75444;margin-left:4px"><svg width="13" height="13" viewBox="0 0 16 16" style="" fill="currentColor"><path fill-rule="evenodd" d="M1.600 3.200h3.700l.9-1.800h3.600l.9 1.800h3.700v1.800H1.600zM6.600 2.500l-.4.7h3.600l-.4-.7zM2.700 5.700h10.600l-.6 8.400q-.1 1.100-1.200 1.100H4.500q-1.100 0-1.200-1.100zM5.500 7.500v5.600h.6V7.500zM7.700 7.500v5.600h.6V7.500zM9.900 7.500v5.600h.6V7.500z"/></svg></a></td></tr><tr class=""><td><i class="cb"></i></td><td>12</td><td>信紘科</td><td>TWS:6667:STOCK</td><td>6667</td><td>67.80</td><td>48.00</td><td>425</td><td>0</td><td>2022-09-05</td><td>2022-08-30</td><td>2022-09-01</td><td>2022-09-14</td><td class="g">上柜</td><td>2022-09-08 08:52:35</td><td>1</td><td class="r st"><b style="background:#f75444"></b>已结束</td><td class="opc"><a class="op" style="width:24px;background:#7f859d"><svg width="14" height="14" viewBox="0 0 16 16" style="" fill="currentColor"><path d="M8 .4l2.900 3.500H5.100zM8 15.600l-2.900-3.500h5.800zM.4 8l3.500-2.900v5.800zM15.600 8l-3.500 2.900V5.100z"/><path d="M8 3.500v9M3.500 8h9" stroke="currentColor" stroke-width="2.200"/></svg></a><a class="op" style="width:22px;background:#18bc9c;margin-left:4px"><svg width="13" height="13" viewBox="0 0 16 16" style="" fill="currentColor"><path d="M11.2 1.4q.5-.5 1 0l2.4 2.4q.5.5 0 1L13.3 6.1 9.9 2.7zM9.1 3.5l3.4 3.4-7.3 7.3-3.4-3.4zM1.3 14.7l.4-3.1 2.7 2.7z"/></svg></a><a class="op" style="width:21px;background:#f75444;margin-left:4px"><svg width="13" height="13" viewBox="0 0 16 16" style="" fill="currentColor"><path fill-rule="evenodd" d="M1.600 3.200h3.700l.9-1.800h3.600l.9 1.800h3.700v1.800H1.600zM6.600 2.500l-.4.7h3.600l-.4-.7zM2.700 5.700h10.600l-.6 8.400q-.1 1.100-1.200 1.100H4.500q-1.100 0-1.200-1.100zM5.500 7.500v5.600h.6V7.500zM7.700 7.500v5.600h.6V7.500zM9.900 7.500v5.600h.6V7.500z"/></svg></a></td></tr><tr class="odd"><td><i class="cb"></i></td><td>13</td><td>奇鈦科</td><td>TWG:3430:STOCK</td><td>3430</td><td>59.00</td><td>42.00</td><td>776</td><td>0</td><td>2022-09-02</td><td>2022-08-29</td><td>2022-08-31</td><td>2022-09-08</td><td class="g">上柜</td><td>2022-09-08 08:52:35</td><td>1</td><td class="r st"><b style="background:#f75444"></b>已结束</td><td class="opc"><a class="op" style="width:24px;background:#7f859d"><svg width="14" height="14" viewBox="0 0 16 16" style="" fill="currentColor"><path d="M8 .4l2.900 3.500H5.100zM8 15.600l-2.900-3.500h5.800zM.4 8l3.500-2.900v5.800zM15.600 8l-3.500 2.900V5.100z"/><path d="M8 3.500v9M3.500 8h9" stroke="currentColor" stroke-width="2.200"/></svg></a><a class="op" style="width:22px;background:#18bc9c;margin-left:4px"><svg width="13" height="13" viewBox="0 0 16 16" style="" fill="currentColor"><path d="M11.2 1.4q.5-.5 1 0l2.4 2.4q.5.5 0 1L13.3 6.1 9.9 2.7zM9.1 3.5l3.4 3.4-7.3 7.3-3.4-3.4zM1.3 14.7l.4-3.1 2.7 2.7z"/></svg></a><a class="op" style="width:21px;background:#f75444;margin-left:4px"><svg width="13" height="13" viewBox="0 0 16 16" style="" fill="currentColor"><path fill-rule="evenodd" d="M1.600 3.200h3.700l.9-1.800h3.600l.9 1.800h3.700v1.800H1.600zM6.600 2.500l-.4.7h3.600l-.4-.7zM2.700 5.700h10.600l-.6 8.400q-.1 1.100-1.200 1.100H4.500q-1.100 0-1.200-1.100zM5.500 7.500v5.600h.6V7.500zM7.700 7.500v5.600h.6V7.500zM9.900 7.500v5.600h.6V7.500z"/></svg></a></td></tr><tr class=""><td><i class="cb"></i></td><td>14</td><td>正德</td><td>TWS:2641:STOCK</td><td>2641</td><td>18.10</td><td>18.28</td><td>4250</td><td>0</td><td>2022-08-29</td><td>2022-08-23</td><td>2022-08-25</td><td>2022-09-06</td><td class="g">上柜</td><td>2022-09-08 08:52:35</td><td>1</td><td class="r st"><b style="background:#f75444"></b>已结束</td><td class="opc"><a class="op" style="width:24px;background:#7f859d"><svg width="14" height="14" viewBox="0 0 16 16" style="" fill="currentColor"><path d="M8 .4l2.900 3.500H5.100zM8 15.600l-2.900-3.500h5.800zM.4 8l3.500-2.900v5.800zM15.600 8l-3.500 2.900V5.100z"/><path d="M8 3.500v9M3.500 8h9" stroke="currentColor" stroke-width="2.200"/></svg></a><a class="op" style="width:22px;background:#18bc9c;margin-left:4px"><svg width="13" height="13" viewBox="0 0 16 16" style="" fill="currentColor"><path d="M11.2 1.4q.5-.5 1 0l2.4 2.4q.5.5 0 1L13.3 6.1 9.9 2.7zM9.1 3.5l3.4 3.4-7.3 7.3-3.4-3.4zM1.3 14.7l.4-3.1 2.7 2.7z"/></svg></a><a class="op" style="width:21px;background:#f75444;margin-left:4px"><svg width="13" height="13" viewBox="0 0 16 16" style="" fill="currentColor"><path fill-rule="evenodd" d="M1.600 3.200h3.700l.9-1.800h3.600l.9 1.800h3.700v1.800H1.600zM6.600 2.500l-.4.7h3.600l-.4-.7zM2.700 5.700h10.600l-.6 8.400q-.1 1.100-1.200 1.100H4.500q-1.100 0-1.200-1.100zM5.500 7.500v5.600h.6V7.500zM7.700 7.500v5.600h.6V7.500zM9.900 7.500v5.600h.6V7.500z"/></svg></a></td></tr></tbody></table>
<div id="opshadow"></div>
<div id="scroll"><i class="l"></i><i class="r"></i><b></b></div>
<div id="pinfo">显示第 1 到第 10 条记录，总共 31 条记录 每页显示 <span class="psize">10<svg width="12" height="12" viewBox="0 0 16 16" style="" fill="currentColor"><path d="M3.500 10.500h9L8 5.500z"/></svg></span> 条记录</div>
<div id="pager"><a style="width:66px">上一页</a><a class="on" style="width:34px">1</a><a style="width:32px">2</a><a style="width:33px">3</a><a style="width:33px">4</a><a style="width:67px">下一页</a></div>
<div id="jump"></div>
<div id="jbtn">跳转</div>
</div>
<div id="wstip">WebSocket 链接已断开<i></i></div>
<div id="wsbtn"><svg width="54" height="54" viewBox="0 0 52 52"><circle cx="26" cy="26" r="26" fill="#c4e1fb"/><circle cx="26" cy="26" r="24.300" fill="#1e88f0"/><path d="M26 10.500a15.500 15.500 0 1 1-8.200 28.700L10.500 41l2.600-6.300A15.500 15.500 0 0 1 26 10.500z" fill="#fff"/><path d="M33 12.200A15.500 15.500 0 0 1 41.300 23.500Q34 22.500 33 12.200z" fill="#7db3f3"/></svg></div>
<div class="wm" style="left:31px;top:5px">www.php93.com</div>
<div class="wm" style="left:541px;top:5px">www.php93.com</div>
<div class="wm" style="left:1051px;top:5px">www.php93.com</div>
<div class="wm" style="left:1556px;top:5px">www.php93.com</div>
<div class="wm" style="left:31px;top:411px">www.php93.com</div>
<div class="wm" style="left:541px;top:411px">www.php93.com</div>
<div class="wm" style="left:1051px;top:411px">www.php93.com</div>
<div class="wm" style="left:1556px;top:411px">www.php93.com</div>
<div class="wm" style="left:31px;top:813px">www.php93.com</div>
<div class="wm" style="left:541px;top:813px">www.php93.com</div>
<div class="wm" style="left:1051px;top:813px">www.php93.com</div>
<div class="wm" style="left:1556px;top:813px">www.php93.com</div>
</body>
</html>
